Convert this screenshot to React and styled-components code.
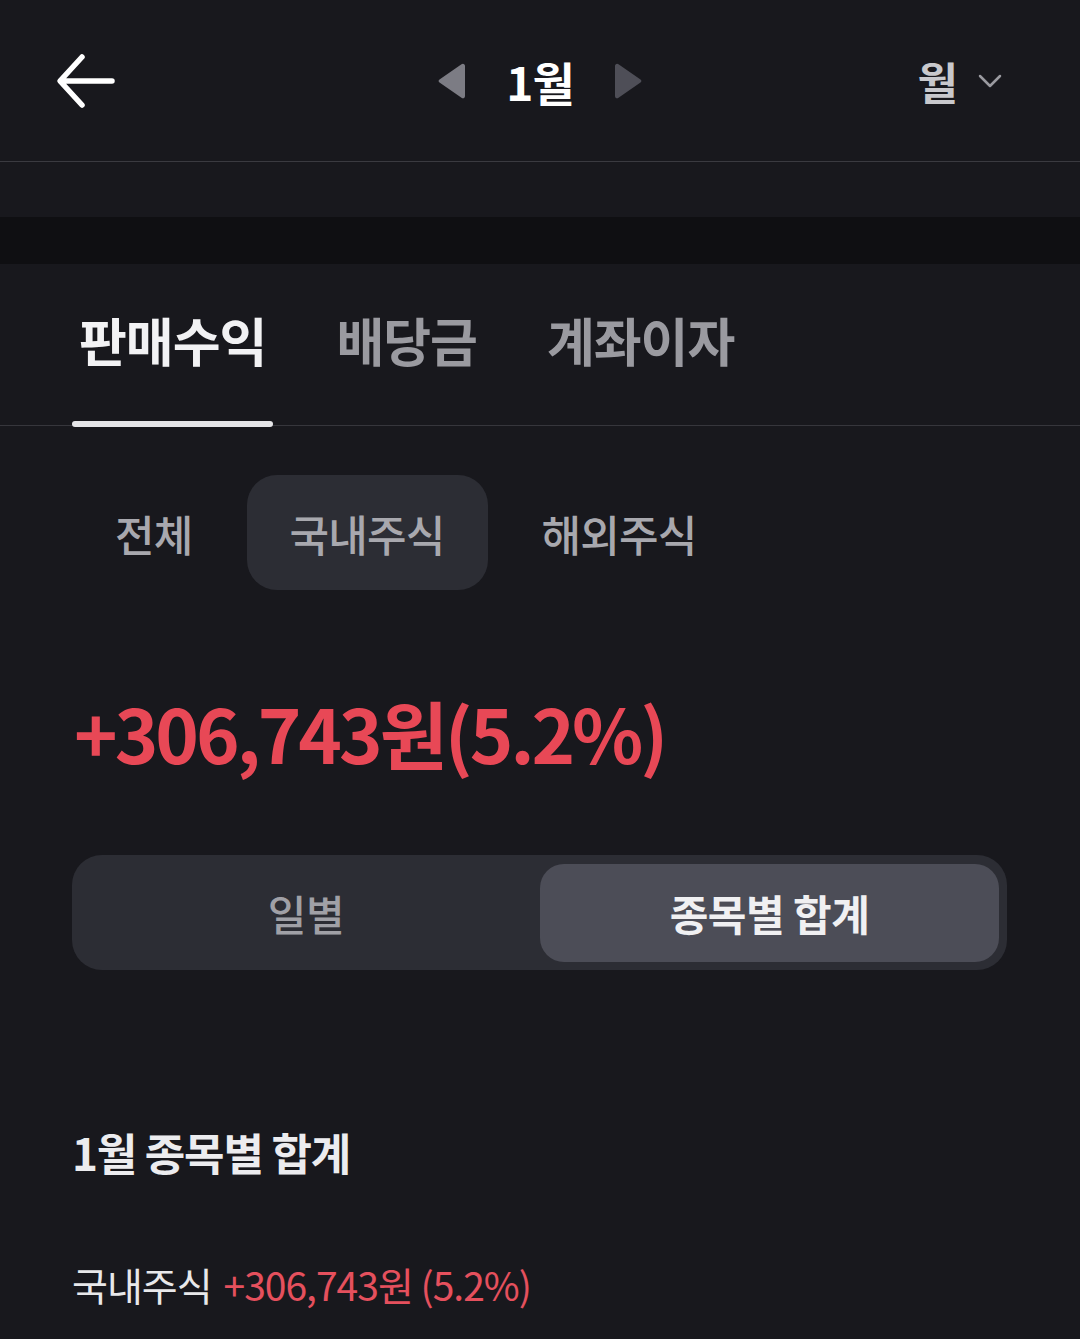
import React, { useState } from "react";
import styled, { createGlobalStyle } from "styled-components";

const GlobalStyle = createGlobalStyle`
  html, body {
    margin: 0;
    padding: 0;
    background: #18181d;
  }
  body {
    font-family: "Noto Sans CJK KR", "Noto Sans", sans-serif;
    color: #ececef;
  }
`;

const Page = styled.div`
  width: 1080px;
  min-height: 1339px;
  background: #18181d;
  overflow: hidden;
`;

const Header = styled.header`
  height: 162px;
  display: grid;
  grid-template-columns: 1fr auto 1fr;
  align-items: center;
  padding: 0 56px;
  border-bottom: 1px solid #3a3a40;
  box-sizing: border-box;
`;

const BackButton = styled.button`
  justify-self: start;
  background: none;
  border: 0;
  padding: 0;
  display: flex;
  cursor: pointer;
`;

const MonthNav = styled.div`
  display: flex;
  align-items: center;
  gap: 38px;
`;

const MonthTitle = styled.span`
  font-size: 46px;
  font-weight: 700;
  color: #ffffff;
  letter-spacing: -1px;
`;

const Arrow = styled.button`
  background: none;
  border: 0;
  padding: 0;
  display: flex;
  color: ${(p) => p.$color};
`;

const PeriodPicker = styled.div`
  justify-self: end;
  display: flex;
  align-items: center;
  gap: 20px;
  margin-right: 22px;
  font-size: 44px;
  font-weight: 700;
  color: #c8c8cc;
`;

const Spacer = styled.div`
  height: 55px;
`;

const Band = styled.div`
  height: 47px;
  background: #0f0f12;
`;

const TabBar = styled.nav`
  display: flex;
  gap: 56px;
  padding: 38px 0 0 72px;
  border-bottom: 1px solid #36363c;
`;

const Tab = styled.button`
  background: none;
  border: 0;
  padding: 0 7px 48px;
  font-family: inherit;
  font-size: 52px;
  font-weight: 700;
  letter-spacing: -1px;
  color: ${(p) => (p.$active ? "#f2f2f4" : "#9a9aa0")};
  position: relative;
  cursor: pointer;
  &::after {
    content: "";
    display: ${(p) => (p.$active ? "block" : "none")};
    position: absolute;
    left: 0;
    right: 0;
    bottom: -2px;
    height: 6px;
    border-radius: 3px;
    background: #e5e5e8;
  }
`;

const ChipRow = styled.div`
  display: flex;
  gap: 11px;
  padding: 49px 0 0 72px;
`;

const Chip = styled.button`
  height: 115px;
  padding: 0 43px;
  border: 0;
  border-radius: 30px;
  background: ${(p) => (p.$active ? "#2c2d34" : "transparent")};
  font-family: inherit;
  font-size: 43px;
  font-weight: 500;
  letter-spacing: -0.8px;
  color: #a8a8ae;
  cursor: pointer;
`;

const Amount = styled.div`
  padding: 98px 0 0 74px;
  font-size: 74px;
  font-weight: 700;
  letter-spacing: -3px;
  color: #e84856;
  line-height: 1.2;
`;

const Segment = styled.div`
  margin: 78px 73px 0 72px;
  height: 115px;
  padding: 9px 8px 8px;
  box-sizing: border-box;
  border-radius: 30px;
  background: #2c2d34;
  display: grid;
  grid-template-columns: 1fr 459px;
  gap: 8px;
`;

const SegmentItem = styled.button`
  border: 0;
  border-radius: 24px;
  background: ${(p) => (p.$active ? "#4c4d57" : "transparent")};
  font-family: inherit;
  font-size: 42px;
  font-weight: ${(p) => (p.$active ? 700 : 500)};
  letter-spacing: -0.5px;
  color: ${(p) => (p.$active ? "#f0f0f2" : "#a0a0a6")};
  cursor: pointer;
`;

const SectionTitle = styled.h2`
  margin: 150px 0 0 72px;
  font-size: 44px;
  font-weight: 700;
  letter-spacing: -1.2px;
  color: #ececef;
`;

const SummaryRow = styled.div`
  margin: 72px 0 0 72px;
  display: flex;
  gap: 12px;
  font-size: 39px;
  font-weight: 400;
  letter-spacing: -1px;
`;

const Label = styled.span`
  color: #e8e8ea;
`;

const Value = styled.span`
  color: #e5505d;
`;

export default function App() {
  const [tab, setTab] = useState(0);
  const [chip, setChip] = useState(1);
  const [view, setView] = useState(1);
  const tabs = ["판매수익", "배당금", "계좌이자"];
  const chips = ["전체", "국내주식", "해외주식"];

  return (
    <Page>
      <GlobalStyle />
      <Header>
        <BackButton aria-label="back">
          <svg width="60" height="56" viewBox="0 0 60 56" fill="none">
            <path
              d="M56 28H6M26 4L4 28l22 24"
              stroke="#ffffff"
              strokeWidth="5.5"
              strokeLinecap="round"
              strokeLinejoin="round"
            />
          </svg>
        </BackButton>
        <MonthNav>
          <Arrow $color="#7c7c84" aria-label="prev">
            <svg width="32" height="36" viewBox="0 0 32 36">
              <path d="M29 3v30c0 2-2 3-3.5 1.8L3.5 19.5c-1.2-.9-1.2-2.1 0-3L25.5 1.2C27 0 29 1 29 3z" fill="currentColor" />
            </svg>
          </Arrow>
          <MonthTitle>1월</MonthTitle>
          <Arrow $color="#4e4e57" aria-label="next">
            <svg width="32" height="36" viewBox="0 0 32 36">
              <path d="M3 3v30c0 2 2 3 3.5 1.8l22-15.3c1.2-.9 1.2-2.1 0-3L6.5 1.2C5 0 3 1 3 3z" fill="currentColor" />
            </svg>
          </Arrow>
        </MonthNav>
        <PeriodPicker>
          월
          <svg width="24" height="16" viewBox="0 0 24 16" fill="none">
            <path d="M2 3l10 10L22 3" stroke="#9a9aa0" strokeWidth="2.5" strokeLinecap="round" strokeLinejoin="round" />
          </svg>
        </PeriodPicker>
      </Header>
      <Spacer />
      <Band />
      <TabBar>
        {tabs.map((t, i) => (
          <Tab key={t} $active={tab === i} onClick={() => setTab(i)}>
            {t}
          </Tab>
        ))}
      </TabBar>
      <ChipRow>
        {chips.map((c, i) => (
          <Chip key={c} $active={chip === i} onClick={() => setChip(i)}>
            {c}
          </Chip>
        ))}
      </ChipRow>
      <Amount>+306,743원(5.2%)</Amount>
      <Segment>
        <SegmentItem $active={view === 0} onClick={() => setView(0)}>
          일별
        </SegmentItem>
        <SegmentItem $active={view === 1} onClick={() => setView(1)}>
          종목별 합계
        </SegmentItem>
      </Segment>
      <SectionTitle>1월 종목별 합계</SectionTitle>
      <SummaryRow>
        <Label>국내주식</Label>
        <Value>+306,743원 (5.2%)</Value>
      </SummaryRow>
    </Page>
  );
}
